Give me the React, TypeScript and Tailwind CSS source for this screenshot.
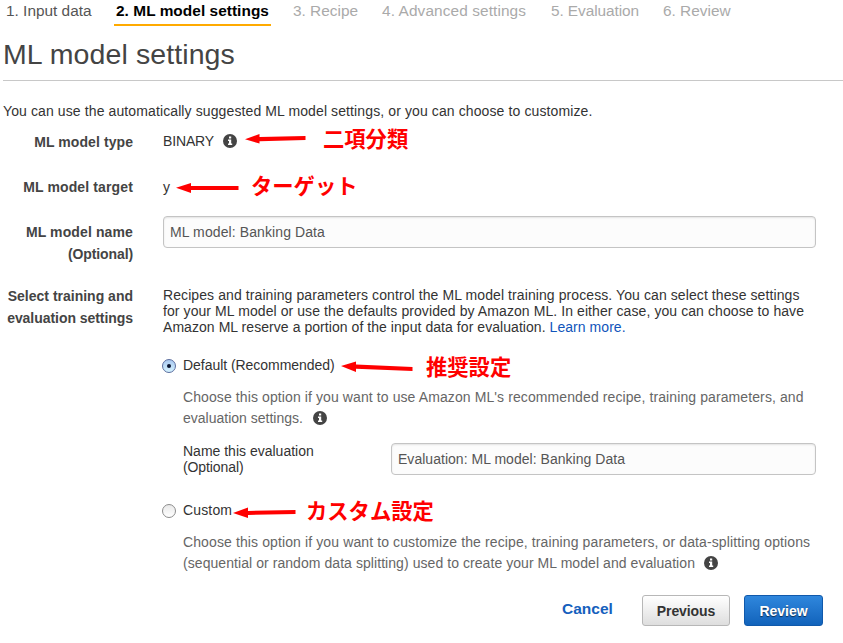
import type { ReactNode } from "react";

const steps = [
  { label: "3. Recipe", cls: "w-[89px]" },
  { label: "4. Advanced settings", cls: "w-[169px] tracking-[0.1px]" },
  { label: "5. Evaluation", cls: "w-[112px] tracking-[-0.08px]" },
  { label: "6. Review", cls: "" },
];

function Line({ children, className = "" }: { children: ReactNode; className?: string }) {
  return (
    <div className="flex whitespace-nowrap">
      <span className={className}>{children}</span>
    </div>
  );
}

function InfoIcon({ className = "" }: { className?: string }) {
  return (
    <svg className={"h-[14px] w-[14px] shrink-0 " + className} viewBox="0 0 14 14">
      <circle cx="7" cy="7" r="7" fill="#444" />
      <path d="M6 2.6h2.2v1.9H6zM5 5.6h3.2v3.9h1v1.4H5V9.500h1V7H5z" fill="#fff" />
    </svg>
  );
}

function Radio({ checked = false }: { checked?: boolean }) {
  return (
    <span
      className={
        "mt-0.5 flex h-[14px] w-[14px] shrink-0 items-center justify-center rounded-full border " +
        (checked
          ? "border-[#5a6d9e] bg-linear-to-b from-[#a9c9f0] to-[#d5f3ff]"
          : "border-[#8c8c8c] bg-linear-to-b from-[#e9e9e9] to-white")
      }
    >
      {checked && <span className="h-1 w-1 rounded-full bg-[#0a1430]" />}
    </span>
  );
}

function Field({ value, className }: { value: ReactNode; className: string }) {
  return (
    <div
      className={
        "flex h-8 items-center rounded-[4px] border border-[#c4c4c4] bg-[#fcfcfc] pl-1.5 whitespace-nowrap text-[#555] shadow-[inset_0_1px_2px_rgba(0,0,0,0.1)] " +
        className
      }
    >
      {value}
    </div>
  );
}

export default function App() {
  return (
    <div className="relative h-[643px] w-[843px] overflow-hidden bg-white font-['Liberation_Sans',Arial,sans-serif] text-[14px] leading-4 text-[#333]">
      <nav className="flex h-[26px] pl-[6px] text-[15.4px] leading-[22px] whitespace-nowrap text-[#aaa]">
        <span className="w-[110px] text-[#555]">1. Input data</span>
        <span className="mr-[22px] -ml-0.5 w-[157px] border-b-2 border-[#fa0] pl-0.5 font-bold tracking-[0.05px] text-black">
          2. ML model settings
        </span>
        {steps.map((s) => (
          <span key={s.label} className={s.cls}>
            {s.label}
          </span>
        ))}
      </nav>

      <h1 className="ml-[3px] h-[55px] border-b border-[#c8c8c8] pt-3 text-[28.5px] leading-8 text-[#444]">
        <span className="tracking-[0.1px]">ML model settings</span>
      </h1>

      <div className="h-[27px] pt-[22px] pl-[3px]">
        <Line className="tracking-[0.11px]">
          You can use the automatically suggested ML model settings, or you can choose to customize.
        </Line>
      </div>

      <div className="grid grid-cols-[133px_653px] gap-x-[30px] pt-[23px]">
        <div className="flex h-[45px] flex-col items-end leading-[22px] font-bold text-[#444]">
          <Line className="tracking-[0.08px]">ML model type</Line>
        </div>
        <div className="flex h-4 items-start gap-[9px] pt-[2px]">
          <span className="tracking-[-0.15px]">BINARY</span>
          <InfoIcon className="mt-px" />
        </div>

        <div className="flex h-[45px] flex-col items-end leading-[22px] font-bold text-[#444]">
          <Line className="tracking-[0.13px]">ML model target</Line>
        </div>
        <div className="pt-[3px]">y</div>

        <div className="flex h-[64px] flex-col items-end leading-[22px] font-bold text-[#444]">
          <Line className="tracking-[0.12px]">ML model name</Line>
          <Line className="tracking-[-0.1px]">(Optional)</Line>
        </div>
        <div className="-mt-[5px]">
          <Field value="ML model: Banking Data" className="w-full tracking-[0.1px]" />
        </div>

        <div className="flex flex-col items-end leading-[22px] font-bold text-[#444]">
          <Line>Select training and</Line>
          <Line className="tracking-[-0.05px]">evaluation settings</Line>
        </div>
        <div className="pt-[2px]">
          <Line className="tracking-[0.09px]">
            Recipes and training parameters control the ML model training process. You can select these settings
          </Line>
          <Line className="tracking-[0.082px]">
            for your ML model or use the defaults provided by Amazon ML. In either case, you can choose to have
          </Line>
          <Line className="tracking-[0.055px]">
            Amazon ML reserve a portion of the input data for evaluation. <a className="text-[#1155bb]">Learn more.</a>
          </Line>

          <div className="mt-[22px] -ml-px flex h-4 items-center gap-[7px]">
            <Radio checked />
            <Line className="tracking-[-0.04px]">Default (Recommended)</Line>
          </div>
          <div className="mt-[14px] pl-5 leading-[21px] text-[#666]">
            <Line className="tracking-[0.1px]">
              Choose this option if you want to use Amazon ML's recommended recipe, training parameters, and
            </Line>
            <div className="flex items-center gap-[10px]">
              <Line>evaluation settings.</Line>
              <InfoIcon className="-mt-px" />
            </div>
          </div>
          <div className="mt-[14px] flex h-8 justify-between pl-5">
            <div>
              <Line>Name this evaluation</Line>
              <Line className="tracking-[-0.1px]">(Optional)</Line>
            </div>
            <Field value="Evaluation: ML model: Banking Data" className="w-[425px] tracking-[0.03px]" />
          </div>
          <div className="mt-[27px] -ml-px flex h-4 items-center gap-[7px]">
            <Radio />
            <Line className="tracking-[0.15px]">Custom</Line>
          </div>
          <div className="mt-[14px] pl-5 leading-[21px] text-[#666]">
            <Line className="tracking-[0.114px]">
              Choose this option if you want to customize the recipe, training parameters, or data-splitting options
            </Line>
            <div className="flex items-center gap-[9px]">
              <Line className="tracking-[0.063px]">
                (sequential or random data splitting) used to create your ML model and evaluation
              </Line>
              <InfoIcon className="-mt-px" />
            </div>
          </div>
        </div>
      </div>

      <div className="mt-[21px] flex h-8 pl-[562px] font-bold">
        <a className="w-[80px] pt-[6px] text-[15.5px] text-[#1560bd]">Cancel</a>
        <button className="mr-[14px] flex h-[31px] w-[88px] items-center justify-center rounded-[3px] border border-[#b7b7b7] bg-linear-to-b from-white to-[#dedede] tracking-[-0.1px] text-[#333]">
          Previous
        </button>
        <button className="flex h-[31px] w-[79px] items-center justify-center rounded-[3px] border border-[#1059ab] bg-linear-to-b from-[#2f87dd] to-[#1163bb] text-white [text-shadow:0_1px_1px_rgba(0,0,0,0.6)]">
          Review
        </button>
      </div>

      {/* Hand-placed annotations over the form */}
      <svg className="absolute inset-0 h-[643px] w-[843px]" viewBox="0 0 843 643" fill="#f00">
        <path d="M245 139.300L259.500 134V137L305.500 136V140L259.500 141.200V143.500Z" />
        <path d="M176 187.800L191 183V186H238.500V190H191V193Z" />
        <path d="M341 366L356 361.500V364.500L412.500 367V371L356 368.700V372Z" />
        <path d="M233 513L248 507.500V511L295.500 510V514L248 515V518Z" />
      </svg>
      <div className="font-['Noto_Sans_CJK_JP',sans-serif] text-[21.3px] leading-6 font-bold whitespace-nowrap text-[#f00]">
        <span className="absolute top-[126px] left-[323px]">二項分類</span>
        <span className="absolute top-[173px] left-[251px]">ターゲット</span>
        <span className="absolute top-[354px] left-[426px]">推奨設定</span>
        <span className="absolute top-[498px] left-[306px]">カスタム設定</span>
      </div>
    </div>
  );
}
